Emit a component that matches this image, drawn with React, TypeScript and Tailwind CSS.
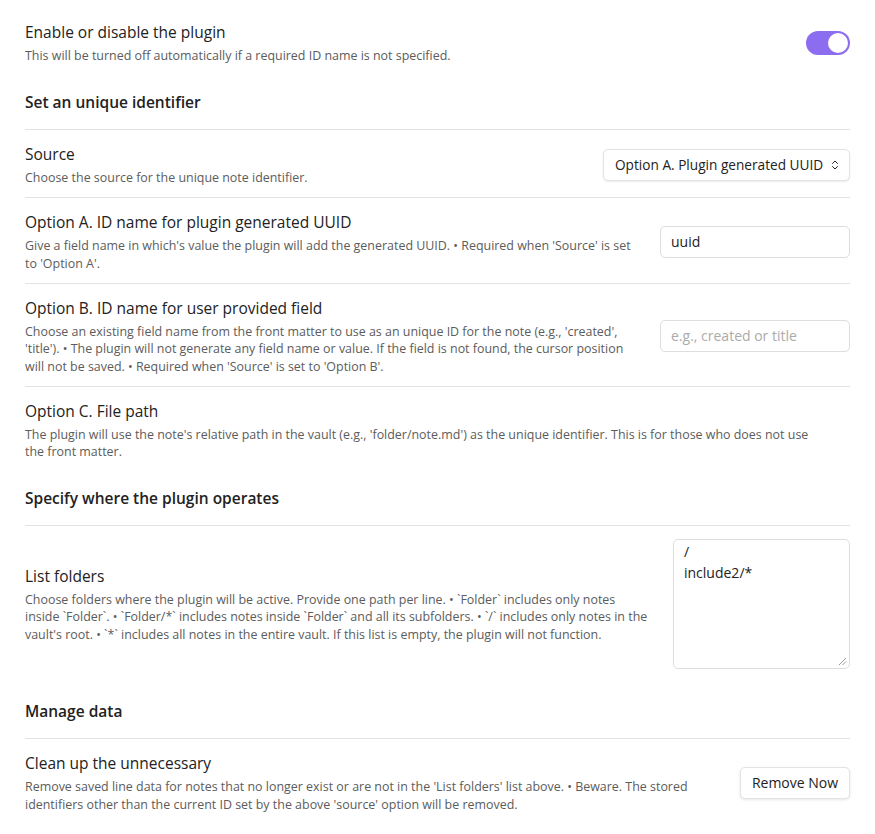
import React from "react";
import { ChevronsUpDown } from "lucide-react";

const FONT = "font-['Open_Sans',sans-serif]";

function Info({ name, desc, mr = "mr-4" }: { name: string; desc?: React.ReactNode; mr?: string }) {
  return (
    <div className={"flex-1 min-w-0 " + mr}>
      <div className="text-[15.5px] leading-[22px] text-[#222222]">{name}</div>
      {desc && (
        <div className="mt-[4px] text-[12.45px] leading-[17.5px] text-[#5c5c5c]">{desc}</div>
      )}
    </div>
  );
}

function Item({
  name,
  desc,
  children,
  border = true,
  mr,
}: {
  name: string;
  desc?: React.ReactNode;
  children?: React.ReactNode;
  border?: boolean;
  mr?: string;
}) {
  return (
    <div
      className={
        "flex items-center pt-[13px] pb-[10.5px] " +
        (border ? "border-t border-[#e3e3e3]" : "")
      }
    >
      <Info name={name} desc={desc} mr={mr} />
      {children && <div className="flex-none flex items-center">{children}</div>}
    </div>
  );
}

function Heading({ text }: { text: string }) {
  return (
    <div className="pt-[16px] pb-4 border-b border-[#e3e3e3]">
      <div className="text-[15.5px] leading-[22px] font-semibold text-[#222222]">{text}</div>
    </div>
  );
}

export default function App() {
  return (
    <div className={`${FONT} bg-white min-h-[834px] w-[875px] px-[25px] pt-[8px]`}>
      <Item
        border={false}
        name="Enable or disable the plugin"
        desc="This will be turned off automatically if a required ID name is not specified."
      >
        <div className="w-[44px] h-[24px] rounded-full bg-[#8c6cef] flex items-center justify-end px-[2px]">
          <div className="w-[20px] h-[20px] rounded-full bg-white" />
        </div>
      </Item>

      <Heading text="Set an unique identifier" />

      <div>
        <Item border={false} name="Source" desc="Choose the source for the unique note identifier.">
          <div className="h-[32px] w-[247px] rounded-[5px] border border-[#e3e3e3] bg-white shadow-[0_1px_2px_rgba(0,0,0,0.08)] flex items-center justify-between pl-[11px] pr-[8px] text-[13.65px] text-[#222222] whitespace-nowrap">
            <span>Option A. Plugin generated UUID</span>
            <ChevronsUpDown size={12} strokeWidth={2} className="flex-none text-[#222222]" />
          </div>
        </Item>
        <Item
          name="Option A. ID name for plugin generated UUID"
          desc="Give a field name in which's value the plugin will add the generated UUID. • Required when 'Source' is set to 'Option A'."
        >
          <div className="h-[32px] w-[190px] rounded-[5px] border border-[#dedede] bg-white flex items-center px-[10px] text-[14px] text-[#222222]">
            uuid
          </div>
        </Item>
        <Item
          name="Option B. ID name for user provided field"
          desc="Choose an existing field name from the front matter to use as an unique ID for the note (e.g., 'created', 'title'). • The plugin will not generate any field name or value. If the field is not found, the cursor position will not be saved. • Required when 'Source' is set to 'Option B'."
        >
          <div className="h-[32px] w-[190px] rounded-[5px] border border-[#dedede] bg-white flex items-center px-[10px] text-[14px] text-[#ababab]">
            e.g., created or title
          </div>
        </Item>
        <Item
          mr="mr-[30px]"
          name="Option C. File path"
          desc="The plugin will use the note's relative path in the vault (e.g., 'folder/note.md') as the unique identifier. This is for those who does not use the front matter."
        />
      </div>

      <Heading text="Specify where the plugin operates" />

      <div className="flex items-center pt-[13px] pb-[15px]">
        <Info
          mr="mr-6"
          name="List folders"
          desc="Choose folders where the plugin will be active. Provide one path per line. • `Folder` includes only notes inside `Folder`. • `Folder/*` includes notes inside `Folder` and all its subfolders. • `/` includes only notes in the vault's root. • `*` includes all notes in the entire vault. If this list is empty, the plugin will not function."
        />
        <div className="relative flex-none w-[177px] h-[130px] rounded-[5px] border border-[#dedede] bg-white px-[10px] pt-[1px] text-[14px] leading-[21px] text-[#222222]">
          <div>/</div>
          <div>include2/*</div>
          <svg className="absolute right-[2px] bottom-[2px]" width="9" height="9" viewBox="0 0 9 9">
            <line x1="8" y1="1" x2="1" y2="8" stroke="#9a9a9a" strokeWidth="1" />
            <line x1="8" y1="4.5" x2="4.5" y2="8" stroke="#9a9a9a" strokeWidth="1" />
          </svg>
        </div>
      </div>

      <Heading text="Manage data" />

      <Item
        border={false}
        name="Clean up the unnecessary"
        desc="Remove saved line data for notes that no longer exist or are not in the 'List folders' list above. • Beware. The stored identifiers other than the current ID set by the above 'source' option will be removed."
      >
        <div className="h-[32px] w-[110px] rounded-[5px] border border-[#e3e3e3] bg-white shadow-[0_1px_3px_rgba(0,0,0,0.1)] flex items-center justify-center text-[14px] text-[#222222]">
          Remove Now
        </div>
      </Item>
    </div>
  );
}
